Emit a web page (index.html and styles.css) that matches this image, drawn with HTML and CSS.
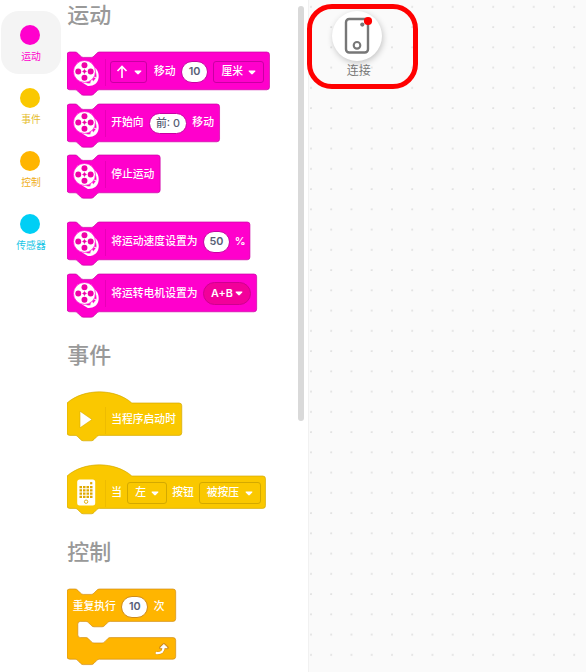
FILE: index.html
```html
<!DOCTYPE html>
<html lang="zh-CN">
<head>
<meta charset="utf-8">
<title>积木编程</title>
<link rel="stylesheet" href="styles.css">
</head>
<body>
<svg class="defs" width="0" height="0">
  <defs>
    <symbol id="reel" viewBox="0 0 40 40">
      <path d="M27 8C35 11 39 18 38 26C37 35 30 39 22 38.500L13 33Z" fill="#fff"/>
      <path d="M31.500 15q5 5 3.500 11l-4-1M17 32.500q5 4 9 2l1-5M28 29l3-4 3 2-4 5z" fill="#ff00cc" stroke="#fff" stroke-width=".8"/>
      <circle cx="17" cy="17" r="16.300" fill="#fff" stroke="#ff00cc" stroke-width="1"/>
      <g fill="#f000a8"><circle cx="17" cy="7.800" r="4.400"/><circle cx="17" cy="26.200" r="4.400"/><circle cx="7.800" cy="17" r="4.400"/><circle cx="26.200" cy="17" r="4.400"/><circle cx="17" cy="17" r="2.100"/></g>
      <path d="M17 13.500v7M13.500 17h7" stroke="#f000a8" stroke-width="1"/>
    </symbol>
    <symbol id="caret" viewBox="0 0 8 5"><path d="M1.100.6h5.800q1 .1.300 1L4.800 4.100q-.8.800-1.600 0L.8 1.600Q.1.700 1.100.6z" fill="#fff"/></symbol>
  </defs>
</svg>
<div class="app">
  <nav class="cats">
    <div class="cat motion active"><i></i><span>运动</span></div>
    <div class="cat event"><i></i><span>事件</span></div>
    <div class="cat control"><i></i><span>控制</span></div>
    <div class="cat sensor"><i></i><span>传感器</span></div>
  </nav>
  <main class="palette">
    <h2>运动</h2>
    <div class="block motion w1">
      <svg class="shape" viewBox="0 0 300 64"><path d="M0 4A4 4 0 0 1 4 0H12c2 0 3 1 4 2l4 4c1 1 2 2 4 2h12c2 0 3-1 4-2l4-4c1-1 2-2 4-2H296a4 4 0 0 1 4 4v48a4 4 0 0 1-4 4H48c-2 0-3 1-4 2l-4 4c-1 1-2 2-4 2h-12c-2 0-3-1-4-2l-4-4c-1-1-2-2-4-2H4a4 4 0 0 1-4-4z"/></svg>
      <svg class="icon"><use href="#reel"/></svg><b class="sep"></b>
      <span class="drop arrow"><svg class="up" viewBox="0 0 12 14"><path d="M6 13V1.500M1.500 6L6 1.500 10.500 6"/></svg><svg class="caret"><use href="#caret"/></svg></span>
      <span>移动</span><span class="oval">10</span>
      <span class="drop unit">厘米<svg class="caret"><use href="#caret"/></svg></span>
    </div>
    <div class="block motion w2">
      <svg class="shape" viewBox="0 0 226 64"><path d="M0 4A4 4 0 0 1 4 0H12c2 0 3 1 4 2l4 4c1 1 2 2 4 2h12c2 0 3-1 4-2l4-4c1-1 2-2 4-2H222a4 4 0 0 1 4 4v48a4 4 0 0 1-4 4H48c-2 0-3 1-4 2l-4 4c-1 1-2 2-4 2h-12c-2 0-3-1-4-2l-4-4c-1-1-2-2-4-2H4a4 4 0 0 1-4-4z"/></svg>
      <svg class="icon"><use href="#reel"/></svg><b class="sep"></b>
      <span>开始向</span><span class="oval wide">前: 0</span><span>移动</span>
    </div>
    <div class="block motion w3">
      <svg class="shape" viewBox="0 0 138 64"><path d="M0 4A4 4 0 0 1 4 0H12c2 0 3 1 4 2l4 4c1 1 2 2 4 2h12c2 0 3-1 4-2l4-4c1-1 2-2 4-2H134a4 4 0 0 1 4 4v48a4 4 0 0 1-4 4H48c-2 0-3 1-4 2l-4 4c-1 1-2 2-4 2h-12c-2 0-3-1-4-2l-4-4c-1-1-2-2-4-2H4a4 4 0 0 1-4-4z"/></svg>
      <svg class="icon"><use href="#reel"/></svg><b class="sep"></b>
      <span>停止运动</span>
    </div>
    <div class="block motion w4">
      <svg class="shape" viewBox="0 0 271 64"><path d="M0 4A4 4 0 0 1 4 0H12c2 0 3 1 4 2l4 4c1 1 2 2 4 2h12c2 0 3-1 4-2l4-4c1-1 2-2 4-2H267a4 4 0 0 1 4 4v48a4 4 0 0 1-4 4H48c-2 0-3 1-4 2l-4 4c-1 1-2 2-4 2h-12c-2 0-3-1-4-2l-4-4c-1-1-2-2-4-2H4a4 4 0 0 1-4-4z"/></svg>
      <svg class="icon"><use href="#reel"/></svg><b class="sep"></b>
      <span>将运动速度设置为</span><span class="oval">50</span><span class="percent">%</span>
    </div>
    <div class="block motion w5">
      <svg class="shape" viewBox="0 0 281 64"><path d="M0 4A4 4 0 0 1 4 0H12c2 0 3 1 4 2l4 4c1 1 2 2 4 2h12c2 0 3-1 4-2l4-4c1-1 2-2 4-2H277a4 4 0 0 1 4 4v48a4 4 0 0 1-4 4H48c-2 0-3 1-4 2l-4 4c-1 1-2 2-4 2h-12c-2 0-3-1-4-2l-4-4c-1-1-2-2-4-2H4a4 4 0 0 1-4-4z"/></svg>
      <svg class="icon"><use href="#reel"/></svg><b class="sep"></b>
      <span>将运转电机设置为</span><span class="drop ports">A+B<svg class="caret"><use href="#caret"/></svg></span>
    </div>

    <h2 class="h-event">事件</h2>
    <div class="block hat event w6">
      <svg class="shape" viewBox="0 0 170 56"><path d="M0 0c25-22 71-22 96 0H166a4 4 0 0 1 4 4v40a4 4 0 0 1-4 4H48c-2 0-3 1-4 2l-4 4c-1 1-2 2-4 2h-12c-2 0-3-1-4-2l-4-4c-1-1-2-2-4-2H4a4 4 0 0 1-4-4z"/></svg>
      <svg class="icon" viewBox="0 0 27 27"><path d="M7 5.200v16.600L19 13.500z" fill="#fff" stroke="#d9ab00" stroke-width=".6"/></svg><b class="sep"></b>
      <span>当程序启动时</span>
    </div>
    <div class="block hat event w7">
      <svg class="shape" viewBox="0 0 294 56"><path d="M0 0c25-22 71-22 96 0H290a4 4 0 0 1 4 4v40a4 4 0 0 1-4 4H48c-2 0-3 1-4 2l-4 4c-1 1-2 2-4 2h-12c-2 0-3-1-4-2l-4-4c-1-1-2-2-4-2H4a4 4 0 0 1-4-4z"/></svg>
      <svg class="icon" viewBox="0 0 27 27"><rect x="4.200" y=".6" width="18" height="26" rx="2.500" fill="#fff"/><path d="M6.500 8.200h13M6.500 11.400h13M6.500 14.600h13M6.500 17.800h13" stroke="#dfa900" stroke-width="2.300" stroke-dasharray="2.500 1"/><path d="M17.100 3.100h2.200v2.200h-2.200z" fill="#dfa900"/><circle cx="13.100" cy="22.700" r="1.700" fill="none" stroke="#dfa900" stroke-width=".9"/></svg><b class="sep"></b>
      <span>当</span><span class="drop left">左<svg class="caret"><use href="#caret"/></svg></span>
      <span>按钮</span><span class="drop pressed">被按压<svg class="caret"><use href="#caret"/></svg></span>
    </div>

    <h2 class="h-control">控制</h2>
    <div class="block loop control">
      <svg class="shape" viewBox="0 0 161 112"><path d="M0 4A4 4 0 0 1 4 0H12c2 0 3 1 4 2l4 4c1 1 2 2 4 2h12c2 0 3-1 4-2l4-4c1-1 2-2 4-2H157a4 4 0 0 1 4 4v40a4 4 0 0 1-4 4H64c-2 0-3 1-4 2l-4 4c-1 1-2 2-4 2h-12c-2 0-3-1-4-2l-4-4c-1-1-2-2-4-2H20a4 4 0 0 0-4 4v16a4 4 0 0 0 4 4h8c2 0 3 1 4 2l4 4c1 1 2 2 4 2h12c2 0 3-1 4-2l4-4c1-1 2-2 4-2H157a4 4 0 0 1 4 4v24a4 4 0 0 1-4 4H48c-2 0-3 1-4 2l-4 4c-1 1-2 2-4 2h-12c-2 0-3-1-4-2l-4-4c-1-1-2-2-4-2H4a4 4 0 0 1-4-4z"/></svg>
      <div class="row"><span>重复执行</span><span class="oval">10</span><span>次</span></div>
      <div class="foot"><svg viewBox="0 0 14 12"><path d="M1.700 10C6.500 10.300 8.400 8.500 8.600 4.200M5.600 4.700L8.900 1.500 12.200 4.700z" fill="none" stroke="#cf8b17" stroke-width="3" stroke-linejoin="round" stroke-linecap="round"/><path d="M1.700 10C6.500 10.300 8.400 8.500 8.600 4.200" fill="none" stroke="#fff" stroke-width="2.300" stroke-linecap="round"/><path d="M5.600 4.700L8.900 1.500 12.200 4.700z" fill="#fff" stroke="#fff" stroke-linejoin="round"/></svg></div>
    </div>
  </main>
  <div class="rail"><div class="thumb"></div></div>
  <section class="workspace">
    <div class="connect">
      <div class="disc"><svg viewBox="0 0 50 50"><rect x="14" y="8" width="22" height="33.500" rx="3.200" fill="none" stroke="#777" stroke-width="2.400"/><circle cx="25" cy="34.300" r="3.300" fill="none" stroke="#777" stroke-width="2.100"/><circle cx="30.300" cy="13.600" r="2.100" fill="#777"/><circle cx="36" cy="10" r="4.100" fill="#f00"/></svg></div>
      <span>连接</span>
    </div>
  </section>
</div>
</body>
</html>
```
FILE: styles.css
```css
* { box-sizing: border-box; }
body {
  margin: 0;
  width: 586px;
  height: 672px;
  overflow: hidden;
  background: #fff;
  font-family: "Inter", "Noto Sans CJK SC", sans-serif;
}
.defs { position: absolute; }
.app { display: flex; height: 672px; }

.cats { width: 66.700px; padding: 11px 0 0 1px; flex: none; }
.cat {
  width: 60px;
  height: 63px;
  border-radius: 18px;
  display: flex;
  flex-direction: column;
  align-items: center;
  padding-top: 14px;
  font-size: 9.8px;
  line-height: 14px;
  white-space: nowrap;
}
.cat.active { background: #f4f4f4; }
.cat i { width: 20px; height: 20px; border-radius: 50%; background: currentColor; margin: 0 0 5px -2px; }
.cat.motion { color: #ff00cd; }
.cat.event { color: #fac800; }
.cat.event span { color: #e5bd2c; }
.cat.control { color: #ffb500; }
.cat.control span { color: #efae20; }
.cat.sensor { color: #00cff5; }
.cat.sensor span { color: #18c5e5; }

.palette { width: 231.300px; flex: none; height: 672px; overflow: hidden; }
h2 {
  margin: 0 0 22.300px .5px;
  height: 30px;
  font-size: 22px;
  font-weight: 500;
  line-height: 31px;
  color: #999;
}
h2.h-event { margin: 28.500px 0 32.700px .5px; }
h2.h-control { margin: 29px 0 22.500px .5px; }

.block {
  position: relative;
  height: 37.800px;
  display: flex;
  align-items: center;
  gap: 5.400px;
  padding: 2px 0 0 5.400px;
  margin-bottom: 13.500px;
  color: #fff;
  font-size: 10.800px;
  font-weight: 500;
  line-height: 16px;
  white-space: nowrap;
}
.shape { position: absolute; left: 0; top: 0; width: 100%; height: 43.200px; overflow: visible; }
.shape path { stroke-width: 1; }
.motion .shape path { fill: #ff00cc; stroke: #c800a2; }
.event .shape path { fill: #fac800; stroke: #d3a900; }
.control .shape path { fill: #ffb500; stroke: #cf8b17; }
.block > :not(.shape), .row { position: relative; flex: none; }
.icon { width: 27px; height: 27px; top: 1.500px; margin-left: .8px; }
.sep { width: 1px; height: 27px; background: #e800b8; margin-right: -.2px; margin-left: -.3px; }
.event .sep { background: #eebc00; }
.w1 { width: 202.500px; }
.w2 { width: 152.600px; }
.w3 { width: 93.200px; margin-bottom: 29.700px; }
.w4 { width: 183px; }
.w5 { width: 189.700px; }
.w6 { width: 114.800px; }
.w7 { width: 198.500px; }
.hat { height: 32.400px; margin-bottom: 40.500px; padding-top: 3.200px; }
.hat .shape { height: 37.800px; }
.block.hat > .icon { top: -1px; }
.w7 { margin-bottom: 0; }

.oval {
  width: 27px;
  height: 21.600px;
  border-radius: 11px;
  background: #fff;
  border: .7px solid #c800a2;
  color: #575e75;
  text-align: center;
  line-height: 20.500px;
  font-weight: 600;
}
.control .oval { border-color: #cf8b17; }
.oval.wide { width: 38px; font-weight: 500; }
.percent { font-weight: 600; margin-left: -.5px; }
.drop {
  height: 22.300px;
  border: 1px solid #c800a2;
  border-radius: 3px;
  display: flex;
  align-items: center;
  justify-content: space-between;
  padding: 0 7px;
}
.event .drop { border-color: #d3a900; }
.caret { width: 8px; height: 5px; }
.arrow { width: 37px; padding: 0 4.500px; margin-right: 1.500px; margin-left: -1px; }
.up { width: 12px; height: 14px; fill: none; stroke: #fff; stroke-width: 1.600; }
.unit { width: 50.500px; }
.ports { width: 48.300px; border-radius: 12px; background: #f2009a; border-color: #cf0090; font-weight: 600; }
.left { width: 39.500px; }
.pressed { width: 62px; margin-left: -.5px; }

.loop { display: block; width: 108.700px; height: 70.200px; padding: 0; }
.loop .shape { height: 75.600px; }
.row { height: 32.400px; display: flex; align-items: center; gap: 5.400px; padding: 2.500px 0 0 6px; }
.foot { display: flex; justify-content: flex-end; padding: 21px 6px 0 0; }
.foot svg { width: 14px; height: 12px; }

.rail { width: 10px; flex: none; padding-top: 6px; }
.thumb { width: 6px; height: 415px; background: #d9d9d9; border-radius: 3px; }
.workspace {
  flex: 1;
  border-left: 1px solid #f1f1f1;
  background-color: #fafafa;
  background-image: radial-gradient(circle at 2px 7px, #dedede 0, #e4e4e4 .8px, transparent 1.300px);
  background-size: 20.260px 20.260px;
}
.connect {
  width: 111px;
  height: 85px;
  margin: 4px 0 0 -2px;
  border: 5px solid #f00;
  border-radius: 25px;
  display: flex;
  flex-direction: column;
  align-items: center;
  padding: 2px 10.500px 0 0;
}
.disc { width: 50px; height: 50px; border-radius: 50%; background: #fff; box-shadow: 1px 2px 6px rgba(0, 0, 0, .22); flex: none; }
.disc svg { display: block; width: 50px; height: 50px; }
.connect span { font-size: 12px; line-height: 18px; color: #777; margin: 1px 0 0 3px; }
```
